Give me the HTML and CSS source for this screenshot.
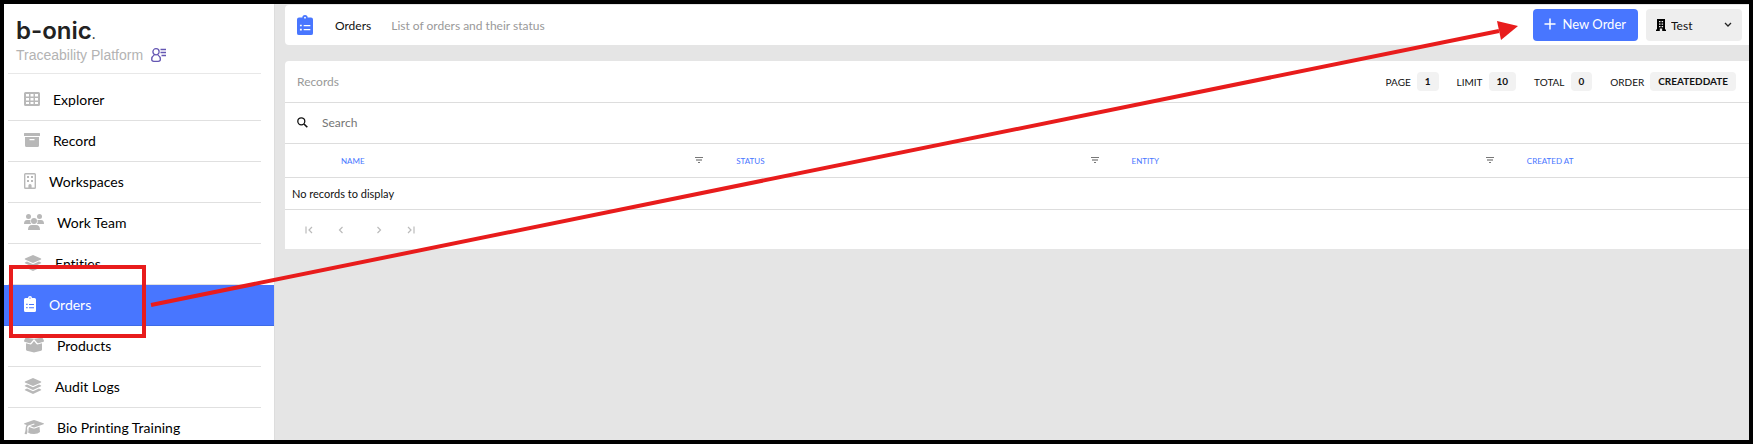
FILE: index.html
```
<!DOCTYPE html>
<html lang="en">
<head>
  <meta charset="UTF-8" />
  <meta name="viewport" content="width=device-width, initial-scale=1.0"/>
  <title>b-onic - Orders</title>
  <link rel="stylesheet" href="styles.css">
</head>
<body>
  <svg class="defs" width="0" height="0" aria-hidden="true">
    <symbol id="i-layers" viewBox="0 0 18 16">
      <path d="M9 0l8 3.6c.4.2.4.6 0 .8L9 8 1 4.400c-.4-.2-.4-.6 0-.8z"/>
      <path d="M3 6.600l6 2.700 6-2.700 2 .9c.4.200.4.600 0 .8L9 12 1 8.300c-.4-.2-.4-.6 0-.8z"/>
      <path d="M3 10.600l6 2.700 6-2.700 2 .9c.4.200.4.600 0 .8L9 16l-8-3.700c-.4-.2-.4-.6 0-.8z"/>
    </symbol>
    <symbol id="i-clipboard" viewBox="0 0 12 16">
      <path fill-rule="evenodd" d="M1.500 2H4a2 2 0 0 1 4 0h2.500A1.500 1.500 0 0 1 12 3.500v11a1.500 1.500 0 0 1-1.500 1.500h-9A1.500 1.500 0 0 1 0 14.500v-11A1.500 1.500 0 0 1 1.500 2zM6 1.400a.7.7 0 1 0 0 1.400.7.7 0 0 0 0-1.400zM2.200 7.700v1.300h1.400V7.700zM5 7.900v1h5v-1zM2.200 11v1.300h1.400V11zM5 11.200v1h5v-1z"/>
    </symbol>
    <symbol id="i-filter" viewBox="0 0 8 7">
      <path d="M0 0h8v1H0z"/>
      <path opacity=".6" d="M1 2h6v2H1z"/>
      <path d="M3 5h2v1H3z"/>
    </symbol>
  </svg>

  <div class="app">
    <aside class="sidebar">
      <div class="brand">
        <div class="logo">b-onic<span>.</span></div>
        <div class="platform">
          Traceability Platform
          <svg width="15" height="14" viewBox="0 0 15 14" fill="none" stroke="#6557b3" stroke-width="1.300">
            <circle cx="5" cy="3.800" r="3.100"/>
            <path d="M3.300 7C1.600 8 .7 9.400.7 11.200c0 1.500.8 2.100 2.100 2.100h4.400c1.400 0 2.200-.6 2.200-2.100C9.400 9.400 8.500 8 6.800 7M9.500 1.500H15M9.500 4.500H15M10.500 7.500H15"/>
          </svg>
        </div>
      </div>
      <nav class="menu">
        <a href="#explorer">
          <svg width="16" height="14" viewBox="0 0 16 14"><path fill-rule="evenodd" d="M1.500 0h13Q16 0 16 1.500v11q0 1.500-1.500 1.500h-13Q0 14 0 12.500v-11Q0 0 1.500 0zM2 2v2.500h3V2zM6.500 2v2.500h3V2zM11 2v2.500h3V2zM2 6v2.500h3V6zM6.500 6v2.500h3V6zM11 6v2.500h3V6zM2 10v2h3v-2zM6.500 10v2h3v-2zM11 10v2h3v-2z"/></svg>
          Explorer
        </a>
        <a href="#record">
          <svg width="16" height="14" viewBox="0 0 16 14"><path fill-rule="evenodd" d="M.5 0h15q.5 0 .5.500V3H0V.500Q0 0 .5 0zM1 4h14v8.500q0 1.500-1.500 1.500h-11Q1 14 1 12.500zM5.500 6v1.300h5V6z"/></svg>
          Record
        </a>
        <a href="#workspaces">
          <svg width="12" height="16" viewBox="0 0 12 16"><path fill-rule="evenodd" d="M1.500 0h9Q12 0 12 1.500v13q0 1.500-1.500 1.500h-9Q0 16 0 14.500v-13Q0 0 1.500 0zM1.400 1.400v13.200h3V12.500a1.600 1.600 0 0 1 3.200 0v2.100h3V1.400z"/><path d="M3 3h2v2H3zM7 3h2v2H7zM3 7h2v2H3zM7 7h2v2H7z"/></svg>
          Workspaces
        </a>
        <a href="#team">
          <svg width="20" height="16" viewBox="0 0 20 16"><circle cx="4.500" cy="2.500" r="2.500"/><circle cx="15.500" cy="2.500" r="2.500"/><circle cx="10" cy="7" r="3"/><path d="M0 10Q0 6 3 6h2.500q.7 0 1.200.3Q5.600 8.400 7.200 10zM20 10q0-4-3-4h-2.500q-.7 0-1.200.3 1.100 2.100-.5 3.700zM4 16q0-5 4-5h4q4 0 4 5z"/></svg>
          Work Team
        </a>
        <a href="#entities">
          <svg width="18" height="16"><use href="#i-layers"/></svg>
          Entities
        </a>
        <a href="#orders" class="active">
          <svg width="12" height="16"><use href="#i-clipboard"/></svg>
          Orders
        </a>
        <a href="#products">
          <svg width="20" height="16" viewBox="0 0 20 16"><path d="M2 .8l8 1 8-1q.6 0 .8.500l1.200 2.500q.2.600-.5.900l-5.200 1.500q-.7.200-1.100-.4L10 1.900 6.800 5.800q-.4.600-1.100.4L.5 4.700Q-.2 4.400 0 3.800l1.200-2.500Q1.400.8 2 .8z"/><path d="M10 4l2 2.500q.9 1.200 2.300.8L18 6.300v6.200q0 1-.9 1.300l-6.200 1.500q-.9.200-1.800 0l-6.200-1.500q-.9-.3-.9-1.300V6.300l3.700 1q1.400.4 2.300-.8z"/></svg>
          Products
        </a>
        <a href="#audit">
          <svg width="18" height="16"><use href="#i-layers"/></svg>
          Audit Logs
        </a>
        <a href="#training">
          <svg width="20" height="16" viewBox="0 0 20 16"><path d="M10 1q.5 0 1 .2l8.500 3q1 .5 0 1l-8.500 3q-1 .4-2 0L6 7l4.500-1.500-.3-.9L4.500 6.500Q3 7.300 3 9.500q1 3.500-.2 5.500-1 .6-2.300-.2Q1.700 12 1.600 9.500q.1-2.200 1-3.600L.5 5.200q-1-.5 0-1l8.500-3q.5-.2 1-.2zM5 8l3.600 1.300q1.400.5 2.800 0L15.500 7.800l.5 5.200q-2 2-6 2t-6-1.500q.8-2 .5-3.500z"/></svg>
          Bio Printing Training
        </a>
      </nav>
    </aside>

    <main class="content">
      <header class="topbar">
        <svg class="title-icon" width="16" height="20" viewBox="0 0 12 16" preserveAspectRatio="none"><use href="#i-clipboard"/></svg>
        <h1>Orders</h1>
        <p>List of orders and their status</p>
        <button type="button" class="new-order">
          <svg width="12" height="12" viewBox="0 0 12 12"><path d="M6 .5v11M.5 6h11" stroke="#fff" stroke-width="1.500"/></svg>
          New Order
        </button>
        <div class="workspace">
          <svg class="building" width="10" height="12" viewBox="0 0 10 12"><path fill-rule="evenodd" d="M1 0h8v10.500h1V12H6.200V9.500H3.800V12H0v-1.500h1zM3 2v1.300h1.500V2zM5.600 2v1.300h1.500V2zM3 4.500v1.300h1.500V4.500zM5.600 4.500v1.300h1.500V4.500zM3 7v1.300h1.500V7zM5.600 7v1.300h1.500V7z"/></svg>
          <select aria-label="Workspace"><option>Test</option></select>
          <svg class="chevron" width="8" height="6" viewBox="0 0 8 6"><path d="M1 1l3 3 3-3" fill="none" stroke="#222" stroke-width="1.300"/></svg>
        </div>
      </header>

      <section class="card">
        <div class="card-head">
          <h2>Records</h2>
          <dl class="stats">
            <div><dt>PAGE</dt><dd>1</dd></div>
            <div><dt>LIMIT</dt><dd>10</dd></div>
            <div><dt>TOTAL</dt><dd>0</dd></div>
            <div><dt>ORDER</dt><dd>CREATEDDATE</dd></div>
          </dl>
        </div>
        <label class="search">
          <svg width="11" height="11" viewBox="0 0 11 11" fill="none" stroke="#111"><circle cx="4.300" cy="4.300" r="3.500" stroke-width="1.300"/><path d="M7 7l3.300 3.300" stroke-width="1.600"/></svg>
          <input type="search" placeholder="Search" aria-label="Search">
        </label>
        <table>
          <colgroup>
            <col class="col-select"><col class="col-data"><col class="col-data"><col class="col-data"><col>
          </colgroup>
          <thead>
            <tr>
              <th></th>
              <th><div>NAME <svg width="8" height="7"><use href="#i-filter"/></svg></div></th>
              <th><div>STATUS <svg width="8" height="7"><use href="#i-filter"/></svg></div></th>
              <th><div>ENTITY <svg width="8" height="7"><use href="#i-filter"/></svg></div></th>
              <th><div>CREATED AT</div></th>
            </tr>
          </thead>
          <tbody>
            <tr><td colspan="5">No records to display</td></tr>
          </tbody>
        </table>
        <div class="pager">
          <button type="button" disabled aria-label="First page"><svg width="8" height="8" viewBox="0 0 8 8"><path d="M1 .5v7M7 1L4 4l3 3"/></svg></button>
          <button type="button" disabled aria-label="Previous page"><svg width="8" height="8" viewBox="0 0 8 8"><path d="M5.500 1l-3 3 3 3"/></svg></button>
          <button type="button" disabled aria-label="Next page"><svg width="8" height="8" viewBox="0 0 8 8"><path d="M2.500 1l3 3-3 3"/></svg></button>
          <button type="button" disabled aria-label="Last page"><svg width="8" height="8" viewBox="0 0 8 8"><path d="M1 1l3 3-3 3M7 .5v7"/></svg></button>
        </div>
      </section>
    </main>
  </div>

  <!-- walkthrough: Orders -> New Order -->
  <svg class="guide" aria-hidden="true">
    <rect x="11" y="267" width="133" height="69" fill="none" stroke="#e81c1c" stroke-width="4"/>
    <path d="M151 305L1499 31" stroke="#e81c1c" stroke-width="4"/>
    <path d="M1518 26l-21-5 4 19z" fill="#e81c1c"/>
  </svg>
</body>
</html>
```
FILE: styles.css
```
* {
  box-sizing: border-box;
}
body {
  margin: 0;
  font-family: Lato, sans-serif;
  font-size: 14px;
  font-variant-ligatures: none;
  color: #111;
  background: #e5e5e5;
}
h1, h2, p, dl, dd {
  margin: 0;
  font-weight: normal;
}
button, input, select {
  font-family: inherit;
  border: none;
}
svg {
  flex-shrink: 0;
}
.defs {
  position: absolute;
}
.app {
  display: flex;
  height: 100vh;
  border: 4px solid #000;
  overflow: hidden;
}

/* sidebar */
.sidebar {
  flex: 0 0 270px;
  background: #fff;
  overflow: hidden;
}
.brand {
  margin: 0 13px 6px 4px;
  padding: 13px 8px 8px;
  border-bottom: 1px solid #e8e8e8;
}
.logo {
  font: 600 24px/28px Inter, sans-serif;
  color: #222;
}
.logo span {
  font-size: 12px;
  line-height: 0;
}
.platform {
  display: flex;
  align-items: center;
  gap: 8px;
  font: 14px/20px "Liberation Sans", sans-serif;
  color: #b3b3b3;
}
.menu a {
  display: flex;
  align-items: center;
  gap: 13px;
  height: 41px;
  margin: 0 13px 0 4px;
  padding: 0 0 2px 16px;
  border-bottom: 1px solid #e0e0e0;
  color: #000;
  text-decoration: none;
}
.menu svg {
  fill: #b8b8b8;
}
.menu .active {
  margin: 0;
  padding-left: 20px;
  background: #4876ff;
  border-color: #3e6be6;
  color: #fff;
}
.menu .active svg {
  fill: #fff;
}

/* content */
.content {
  flex: 1;
  min-width: 0;
  padding: 1px 0 0 10px;
  border-left: 1px solid #ddd;
}
.topbar {
  display: flex;
  align-items: center;
  height: 40px;
  padding: 0 7px 0 12px;
  background: #fff;
  border-radius: 4px 0 0 4px;
}
.title-icon {
  fill: #4876ff;
}
.topbar h1 {
  margin-left: 22px;
  font-size: 12px;
}
.topbar p {
  margin-left: 20px;
  font-size: 12px;
  color: #999;
}
.new-order {
  display: flex;
  align-items: center;
  gap: 7px;
  height: 32px;
  margin-left: auto;
  padding: 0 12px 2px 11px;
  border-radius: 4px;
  background: #4876ff;
  color: #fff;
  font-size: 13px;
}
.workspace {
  display: flex;
  align-items: center;
  width: 96px;
  height: 32px;
  margin-left: 8px;
  padding: 0 10px;
  border-radius: 4px;
  background: #eee;
}
.workspace select {
  appearance: none;
  flex: 1;
  min-width: 0;
  padding: 0 0 0 5px;
  background: transparent;
  font-size: 12px;
  color: #111;
}
.card {
  margin-top: 16px;
  background: #fff;
  border-radius: 4px 0 0 0;
}
.card-head {
  display: flex;
  align-items: center;
  justify-content: space-between;
  height: 42px;
  padding: 0 13px 0 12px;
  border-bottom: 1px solid #ddd;
}
.card-head h2 {
  font-size: 12px;
  color: #999;
}
.stats {
  display: flex;
  gap: 18px;
  font-size: 10px;
}
.stats div {
  display: flex;
  align-items: center;
  gap: 6px;
}
.stats dd {
  padding: 0 8px;
  line-height: 19px;
  border-radius: 4px;
  background: #f2f2f2;
  font-weight: bold;
}
.search {
  display: flex;
  align-items: center;
  gap: 14px;
  height: 41px;
  padding: 0 12px 2px;
  border-bottom: 1px solid #ddd;
}
.search input {
  flex: 1;
  padding: 0;
  outline: none;
  font-size: 12px;
}
.search input::placeholder {
  color: #757575;
}
table {
  width: 100%;
  table-layout: fixed;
  border-collapse: separate;
  border-spacing: 0;
}
.col-select {
  width: 45px;
}
.col-data {
  width: 27%;
}
th, td {
  padding: 0;
  border-bottom: 1px solid #ddd;
  text-align: left;
}
th {
  height: 34px;
  padding: 0 22px 0 11px;
  font-size: 8px;
  font-weight: normal;
  color: #4876ff;
}
th div {
  display: flex;
  align-items: center;
  justify-content: space-between;
}
th svg {
  fill: #777;
}
td {
  height: 32px;
  padding-left: 7px;
  font-size: 11px;
}
.pager {
  display: flex;
  align-items: center;
  gap: 24px;
  height: 39px;
  padding-left: 20px;
}
.pager button {
  display: flex;
  padding: 0;
  background: none;
}
.pager button:nth-child(3) {
  margin-left: 6px;
}
.pager path {
  fill: none;
  stroke: #bbb;
  stroke-width: 1.2;
}

/* guide arrow drawn over the page */
.guide {
  position: absolute;
  top: 0;
  left: 0;
  width: 100%;
  height: 100%;
  pointer-events: none;
}
```
